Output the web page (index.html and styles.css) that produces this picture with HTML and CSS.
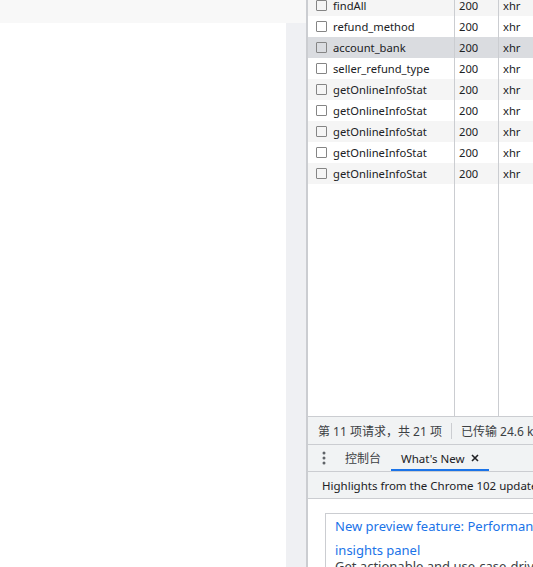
FILE: index.html
```html
<!DOCTYPE html>
<html>
<head>
<meta charset="utf-8">
<link rel="stylesheet" href="styles.css">
</head>
<body>
<div class="page">
  <div class="left">
    <div class="topstrip"></div>
    <div class="leftbody">
      <div class="blank"></div>
      <div class="gutter"></div>
    </div>
  </div>
  <div class="divider"></div>
  <div class="devtools">
    <div class="table">
      <div class="rows">
        <div class="row odd"><div class="c name"><span class="cb"></span>findAll</div><div class="c status">200</div><div class="c type">xhr</div></div>
        <div class="row"><div class="c name"><span class="cb"></span>refund_method</div><div class="c status">200</div><div class="c type">xhr</div></div>
        <div class="row sel"><div class="c name"><span class="cb"></span>account_bank</div><div class="c status">200</div><div class="c type">xhr</div></div>
        <div class="row"><div class="c name"><span class="cb"></span>seller_refund_type</div><div class="c status">200</div><div class="c type">xhr</div></div>
        <div class="row odd"><div class="c name"><span class="cb"></span>getOnlineInfoStat</div><div class="c status">200</div><div class="c type">xhr</div></div>
        <div class="row"><div class="c name"><span class="cb"></span>getOnlineInfoStat</div><div class="c status">200</div><div class="c type">xhr</div></div>
        <div class="row odd"><div class="c name"><span class="cb"></span>getOnlineInfoStat</div><div class="c status">200</div><div class="c type">xhr</div></div>
        <div class="row"><div class="c name"><span class="cb"></span>getOnlineInfoStat</div><div class="c status">200</div><div class="c type">xhr</div></div>
        <div class="row odd"><div class="c name"><span class="cb"></span>getOnlineInfoStat</div><div class="c status">200</div><div class="c type">xhr</div></div>
        <div class="row filler"><div class="c name"></div><div class="c status"></div><div class="c type"></div></div>
      </div>
    </div>
    <div class="statusbar">
      <span class="st1">第 11 项请求，共 21 项</span>
      <span class="sep"></span>
      <span class="st2">已传输 24.6 kB</span>
    </div>
    <div class="tabbar">
      <svg class="dots" width="4" height="14" viewBox="0 0 4 14"><circle cx="2" cy="2" r="1.5" fill="#5f6368"/><circle cx="2" cy="7" r="1.5" fill="#5f6368"/><circle cx="2" cy="12" r="1.5" fill="#5f6368"/></svg>
      <span class="tab">控制台</span>
      <span class="tab active">What's New<svg class="close" width="8" height="8" viewBox="0 0 8 8"><path d="M1 1L7 7M7 1L1 7" stroke="#202124" stroke-width="1.6"/></svg></span>
    </div>
    <div class="hlbar">Highlights from the Chrome 102 update</div>
    <div class="content">
      <div class="card">
        <div class="link">New preview feature: Performance insights panel</div>
        <div class="desc">Get actionable and use-case-driven insights on your website's performance.</div>
      </div>
    </div>
  </div>
</div>
</body>
</html>
```
FILE: styles.css
```css
* { box-sizing: border-box; }
html, body { margin: 0; padding: 0; }
body {
  width: 533px;
  height: 567px;
  overflow: hidden;
  font-family: "Noto Sans", "Noto Sans CJK SC", sans-serif;
  font-size: 12px;
  color: #202124;
  background: #fff;
}
.page { display: flex; height: 567px; }
.left { width: 306px; display: flex; flex-direction: column; flex: none; }
.topstrip { height: 23px; background: #f8f8f8; flex: none; }
.leftbody { flex: 1; display: flex; }
.blank { flex: 1; background: #fff; }
.gutter { width: 20px; background: #eff0f3; }
.divider { width: 2px; background: #cbcdd1; flex: none; }
.devtools { width: 225px; flex: none; display: flex; flex-direction: column; overflow: hidden; }
.table { height: 416px; flex: none; overflow: hidden; display: flex; flex-direction: column; }
.rows { display: flex; flex-direction: column; margin-top: -5px; flex: 1; }
.row { display: flex; height: 21px; flex: none; align-items: stretch; font-size: 11.2px; }
.row.odd { background: #f5f5f5; }
.row.sel { background: #dadce0; }
.row.filler { flex: 1; height: auto; }
.c { display: flex; align-items: center; border-right: 1px solid #cbcdd1; white-space: nowrap; overflow: hidden; }
.name { width: 147px; padding-left: 8px; }
.status { width: 44px; padding-left: 4px; }
.type { flex: 1; padding-left: 4px; border-right: none; }
.cb { width: 11px; height: 11px; border: 1px solid #858585; border-radius: 1px; margin-right: 6px; flex: none; background: transparent; }
.statusbar { height: 28px; flex: none; border-top: 1px solid #cbcdd1; background: #f1f3f4; display: flex; align-items: center; padding-left: 10px; white-space: nowrap; color: #3c4043; }
.sep { width: 1px; height: 16px; background: #cbcdd1; margin: 0 9px 0 9px; flex: none; }
.tabbar { height: 28px; flex: none; border-top: 1px solid #cbcdd1; border-bottom: 1px solid #cbcdd1; display: flex; align-items: stretch; background: #f1f3f4; }
.dots { align-self: center; margin-left: 14px; margin-right: 9px; }
.tab { display: flex; align-items: center; padding: 0 10px; color: #3c4043; white-space: nowrap; }
.tab.active { color: #202124; border-bottom: 2px solid #1a73e8; padding-top: 2px; font-size: 11.5px; }
.close { margin-left: 7px; }
.hlbar { height: 27px; flex: none; border-bottom: 1px solid #cbcdd1; background: #f1f3f4; display: flex; align-items: center; padding-left: 14px; white-space: nowrap; font-size: 11.5px; }
.content { flex: 1; padding: 14px 0 0 17px; }
.card { border: 1px solid #cbcdd1; border-right: none; padding: 0 0 0 9px; width: 260px; }
.link { color: #1a73e8; font-size: 13px; line-height: 24px; }
.desc { font-size: 13px; line-height: 20px; margin-top: -6px; color: #3c4043; }
```
